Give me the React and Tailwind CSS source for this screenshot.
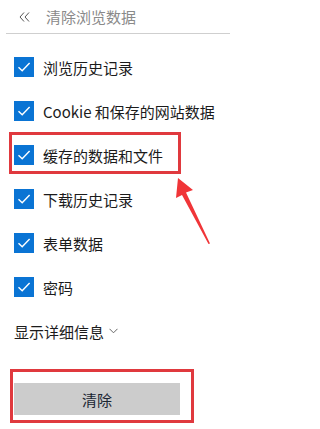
const font = { fontFamily: '"Noto Sans CJK SC", "Noto Sans", sans-serif' }

const items = ['浏览历史记录', 'Cookie 和保存的网站数据', '缓存的数据和文件', '下载历史记录', '表单数据', '密码']

function Check() {
  return (
    <span className="flex h-[20px] w-[20px] shrink-0 items-center justify-center bg-[#0a74d4]">
      <svg width="14" height="14" viewBox="0 0 14 14" fill="none">
        <path d="M1.5 7.2 L5.2 10.8 L12.6 3" stroke="white" strokeWidth="1.4" />
      </svg>
    </span>
  )
}

export default function App() {
  return (
    <div className="relative h-[429px] w-[230px] overflow-hidden bg-white text-[#1b1b1b]" style={font}>
      <div className="ml-[6px] flex h-[34px] items-center border-b border-[#cfcfcf]">
        <svg className="ml-[13px]" width="11" height="10" viewBox="0 0 11 10" fill="none">
          <path d="M5 0.5 L1 5 L5 9.5 M10 0.5 L6 5 L10 9.5" stroke="#555" strokeWidth="1" />
        </svg>
        <span className="ml-[16px] text-[15px] leading-none text-[#8a8a8a]">清除浏览数据</span>
      </div>

      <div className="mt-[11px] flex flex-col">
        {items.map((t) => (
          <div key={t} className="flex h-[44px] items-center gap-[9px] pl-[14px]">
            <Check />
            <span className="text-[15px] leading-none">{t}</span>
          </div>
        ))}
        <div className="flex h-[44px] items-center gap-[5px] pl-[14px]">
          <span className="text-[15px] leading-none">显示详细信息</span>
          <svg width="9" height="6" viewBox="0 0 9 6" fill="none">
            <path d="M0.5 0.8 L4.5 4.8 L8.5 0.8" stroke="#666" strokeWidth="1" />
          </svg>
        </div>
      </div>

      <div className="ml-[14px] mt-[30px] flex h-[32px] w-[166px] items-center justify-center bg-[#cccccc]">
        <span className="text-[15px] leading-none text-[#1a2633]">清除</span>
      </div>

      {/* annotations */}
      <div className="absolute left-[9px] top-[132px] h-[42px] w-[172px] border-[3px] border-[#e0393e]" />
      <div className="absolute left-[10px] top-[369px] h-[54px] w-[184px] border-[3px] border-[#e0393e]" />
      <svg className="absolute left-0 top-0" width="230" height="429" viewBox="0 0 230 429">
        <path d="M178 178 L176 198 L182 195 L208.5 244 L210 243.5 L186 192.5 L193 190 Z" fill="#f03538" />
      </svg>
    </div>
  )
}
